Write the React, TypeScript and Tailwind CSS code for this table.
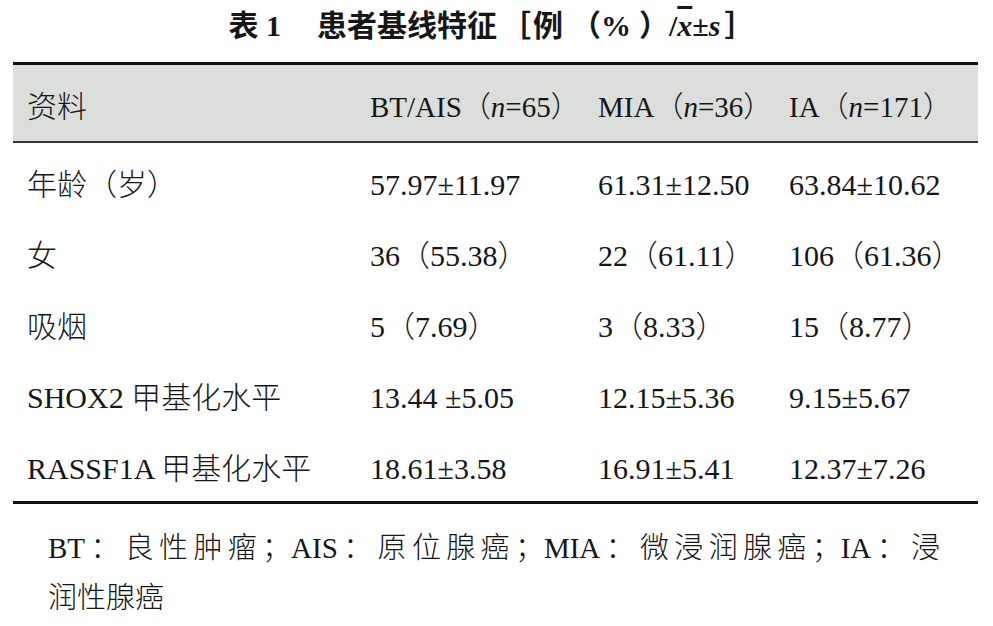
import React from "react";

const F = { fontFamily: '"Liberation Serif", "Noto Sans CJK SC", serif' } as React.CSSProperties;

const rows: [string, string, string, string][] = [
  ["年龄（岁）", "57.97±11.97", "61.31±12.50", "63.84±10.62"],
  ["女", "36（55.38）", "22（61.11）", "106（61.36）"],
  ["吸烟", "5（7.69）", "3（8.33）", "15（8.77）"],
  ["SHOX2 甲基化水平", "13.44 ±5.05", "12.15±5.36", "9.15±5.67"],
  ["RASSF1A 甲基化水平", "18.61±3.58", "16.91±5.41", "12.37±7.26"],
];

const grid = "grid grid-cols-[357px_228px_191px_1fr]";

export default function App() {
  return (
    <div className="w-[993px] h-[626px] bg-white text-[#161616] overflow-hidden font-light" style={F}>
      <div className="h-[50px] flex items-center justify-center pr-[10px] text-[30px] font-bold whitespace-pre">
        <span>表 1</span>
        <span className="ml-[36px]">患者基线特征</span>
        <span className="ml-[4px]">［</span>
        <span className="ml-[2px]">例</span>
        <span className="ml-[8px]">（</span>
        <span>%</span>
        <span className="ml-[8px]">）</span>
        <span>/</span>
        <span className="italic" style={{ textDecoration: "overline" }}>x</span>
        <span>±</span>
        <span className="italic">s</span>
        <span className="ml-[4px]">］</span>
      </div>
      <div className="h-[12px]" />
      <div className="ml-[13px] w-[965px]">
        <div className="h-[3px] bg-[#111]" />
        <div className={`${grid} h-[76px] bg-[#dcdedc] items-center pt-[8px] text-[29px] leading-[36px]`}>
          <div className="pl-[14px] text-[30px]">资料</div>
          <div className="whitespace-nowrap">BT/AIS（<i>n</i>=65）</div>
          <div className="whitespace-nowrap">MIA（<i>n</i>=36）</div>
          <div className="whitespace-nowrap">IA（<i>n</i>=171）</div>
        </div>
        <div className="h-[2px] bg-[#333]" />
        <div className="pb-[3px]">
          {rows.map((r, i) => (
            <div key={i} className={`${grid} h-[71px] pt-[24px] text-[30px] leading-[36px] whitespace-nowrap`}>
              <div className="pl-[14px]">{r[0]}</div>
              <div>{r[1]}</div>
              <div>{r[2]}</div>
              <div>{r[3]}</div>
            </div>
          ))}
        </div>
        <div className="h-[3px] bg-[#111]" />
      </div>
      <div className="pt-[19px] pl-[48px] w-[940px] text-[29px] leading-[50px]">
        <div className="text-justify [text-align-last:justify] whitespace-nowrap">
          BT：良性肿瘤；AIS：原位腺癌；MIA：微浸润腺癌；IA：浸
        </div>
        <div>润性腺癌</div>
      </div>
    </div>
  );
}
